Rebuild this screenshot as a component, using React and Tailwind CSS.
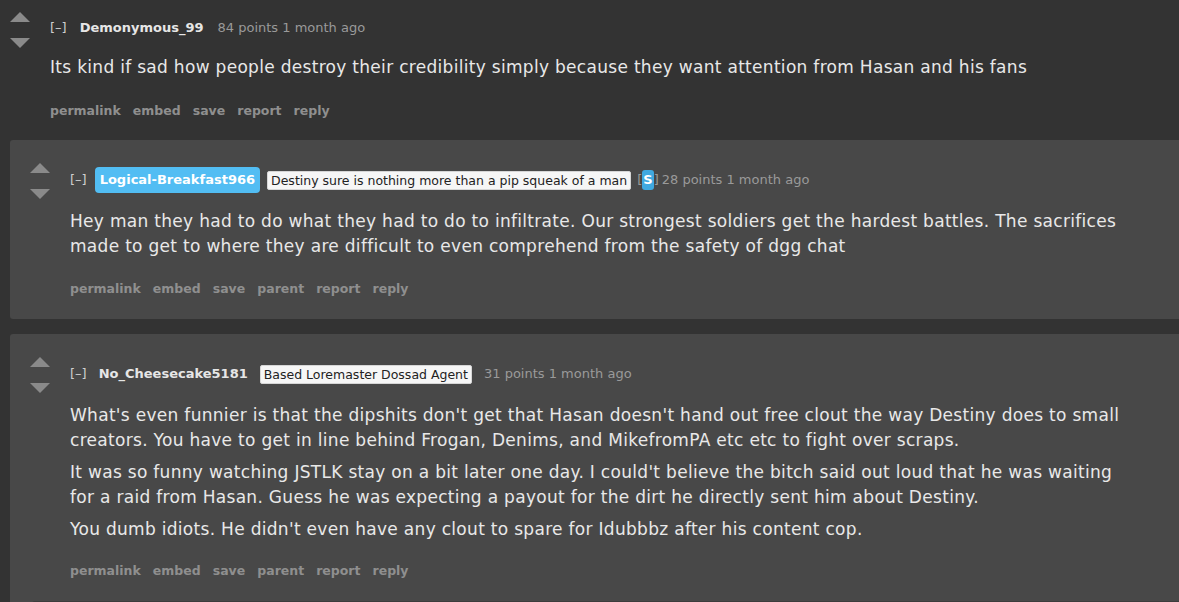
const font = { fontFamily: '"DejaVu Sans", Verdana, sans-serif' };

const Arrows = () => (
  <div className="flex w-[40px] shrink-0 flex-col gap-[16px]">
    <svg width="20" height="10" viewBox="0 0 20 10">
      <polygon points="10,0 20,10 0,10" fill="#8a8a8a" />
    </svg>
    <svg width="20" height="10" viewBox="0 0 20 10">
      <polygon points="0,0 20,0 10,10" fill="#8a8a8a" />
    </svg>
  </div>
);

const Actions = ({ items }) => (
  <div className="flex h-[20px] items-center gap-[12px] text-[12.5px] font-bold leading-[20px] text-[#8f8f8f]">
    {items.map((a) => (
      <span key={a}>{a}</span>
    ))}
  </div>
);

const Flair = ({ children }) => (
  <span className="rounded-[2px] border border-[#d6d6d6] bg-[#f6f6f6] px-[3px] text-[12.5px] leading-[17px] text-[#222]">
    {children}
  </span>
);

const body = 'text-[17px] leading-[25px] tracking-[0.3px] text-[#e8e8e8]';

export default function App() {
  return (
    <div className="h-[602px] w-full overflow-hidden bg-[#333333]" style={font}>
      {/* parent comment */}
      <div className="flex pl-[10px] pt-[12px]">
        <Arrows />
        <div className="pt-[6px]">
          <div className="flex h-[20px] items-center text-[13px] leading-[20px]">
            <span className="mr-[13px] text-[#cfcfcf]">[–]</span>
            <span className="mr-[14px] font-bold text-[#e6e6e6]">Demonymous_99</span>
            <span className="text-[#9a9a9a]">84 points 1 month ago</span>
          </div>
          <p className={`mt-[17px] ${body}`}>
            Its kind if sad how people destroy their credibility simply because they want attention from Hasan and his fans
          </p>
          <div className="mt-[21px]">
            <Actions items={['permalink', 'embed', 'save', 'report', 'reply']} />
          </div>
        </div>
      </div>

      <div className="mt-[19px] ml-[10px] flex flex-col gap-[15px]">
        {/* reply 1 */}
        <div className="flex rounded-l-[3px] bg-[#484848] pb-[20px] pl-[20px] pt-[23px]">
          <Arrows />
          <div className="pt-[7px] pr-[44px]">
            <div className="flex h-[20px] items-center text-[13px] leading-[20px]">
              <span className="mr-[8px] text-[#cfcfcf]">[–]</span>
              <span className="mr-[7px] rounded-[4px] bg-[#52bdf3] px-[5px] text-[13px] font-bold leading-[26px] text-white">
                Logical-Breakfast966
              </span>
              <Flair>Destiny sure is nothing more than a pip squeak of a man</Flair>
              <span className="ml-[6px] text-[#9a9a9a]">[</span>
              <span className="rounded-[3px] bg-[#3fa9e0] px-[1px] font-bold text-white">S</span>
              <span className="mr-[3px] text-[#9a9a9a]">]</span>
              <span className="text-[#9a9a9a]">28 points 1 month ago</span>
            </div>
            <p className={`mt-[19px] ${body}`}>
              Hey man they had to do what they had to do to infiltrate. Our strongest soldiers get the hardest battles. The sacrifices made to get to where they are difficult to even comprehend from the safety of dgg chat
            </p>
            <div className="mt-[20px]">
              <Actions items={['permalink', 'embed', 'save', 'parent', 'report', 'reply']} />
            </div>
          </div>
        </div>

        {/* reply 2 */}
        <div className="flex flex-col rounded-l-[3px] bg-[#484848] pt-[23px]">
          <div className="flex pl-[20px]">
            <Arrows />
            <div className="pt-[7px] pr-[44px]">
              <div className="flex h-[20px] items-center text-[13px] leading-[20px]">
                <span className="mr-[12px] text-[#cfcfcf]">[–]</span>
                <span className="mr-[12px] font-bold text-[#e6e6e6]">No_Cheesecake5181</span>
                <Flair>Based Loremaster Dossad Agent</Flair>
                <span className="ml-[12px] text-[#9a9a9a]">31 points 1 month ago</span>
              </div>
              <div className={`mt-[19px] flex flex-col gap-[7px] ${body}`}>
                <p>
                  What's even funnier is that the dipshits don't get that Hasan doesn't hand out free clout the way Destiny does to small creators. You have to get in line behind Frogan, Denims, and MikefromPA etc etc to fight over scraps.
                </p>
                <p>
                  It was so funny watching JSTLK stay on a bit later one day. I could't believe the bitch said out loud that he was waiting for a raid from Hasan. Guess he was expecting a payout for the dirt he directly sent him about Destiny.
                </p>
                <p>You dumb idiots. He didn't even have any clout to spare for Idubbbz after his content cop.</p>
              </div>
              <div className="mt-[19px]">
                <Actions items={['permalink', 'embed', 'save', 'parent', 'report', 'reply']} />
              </div>
            </div>
          </div>
          <div className="ml-[22px] mt-[20px] h-[40px] rounded-tl-[3px] bg-[#3c3c3c]" />
        </div>
      </div>
    </div>
  );
}
